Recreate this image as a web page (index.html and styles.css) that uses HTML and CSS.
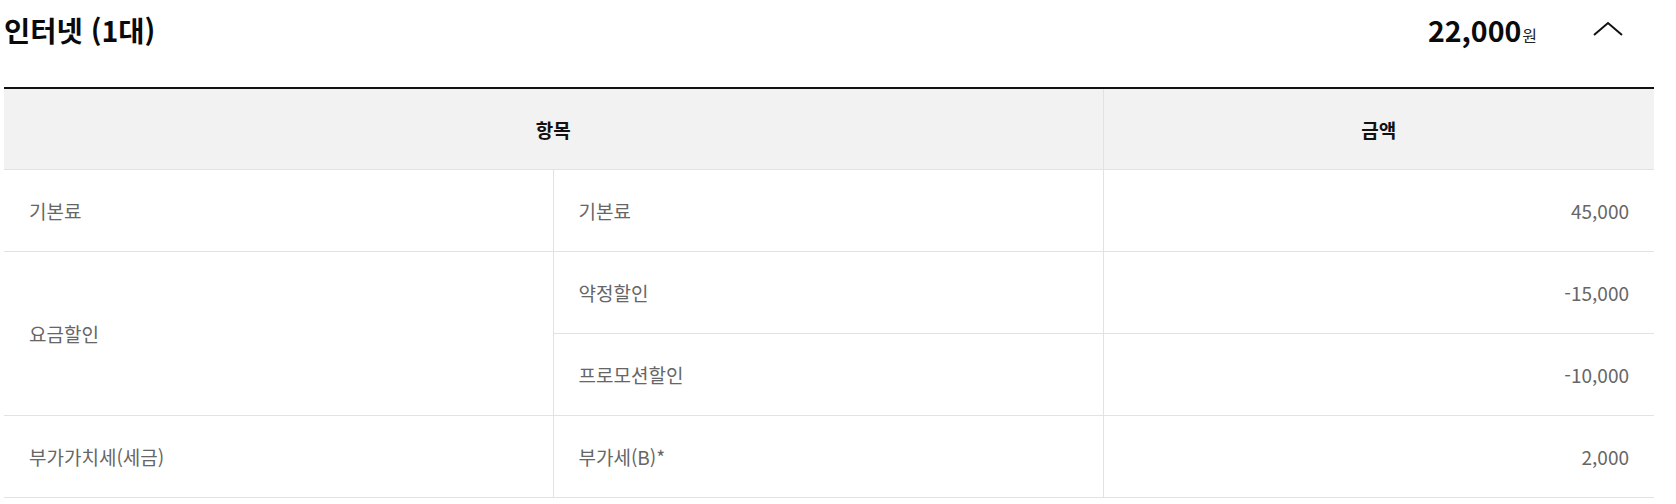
FILE: index.html
```html
<!DOCTYPE html>
<html lang="ko">
<head>
<meta charset="utf-8">
<link rel="stylesheet" href="styles.css">
</head>
<body>
<section class="bill">
  <div class="bill-head">
    <h2 class="bill-title">인터넷 (1대)</h2>
    <div class="bill-sum">
      <span class="sum-num">22,000</span><span class="sum-unit">원</span>
      <button class="toggle" aria-label="접기">
        <svg width="32" height="16" viewBox="0 0 32 16"><polyline points="2,14 16,2 30,14" fill="none" stroke="#111" stroke-width="2"/></svg>
      </button>
    </div>
  </div>
  <table class="bill-table">
    <colgroup><col class="c1"><col class="c2"><col class="c3"></colgroup>
    <thead>
      <tr><th colspan="2">항목</th><th>금액</th></tr>
    </thead>
    <tbody>
      <tr><td>기본료</td><td>기본료</td><td class="num">45,000</td></tr>
      <tr><td rowspan="2">요금할인</td><td>약정할인</td><td class="num">-15,000</td></tr>
      <tr><td class="first-sub">프로모션할인</td><td class="num">-10,000</td></tr>
      <tr><td>부가가치세(세금)</td><td>부가세(B)*</td><td class="num">2,000</td></tr>
    </tbody>
  </table>
</section>
</body>
</html>
```
FILE: styles.css
```css
html, body {
  margin: 0;
  padding: 0;
  background: #fff;
  font-family: "Noto Sans CJK KR", "Noto Sans", sans-serif;
}
.bill {
  width: 1650px;
  margin-left: 4px;
}
.bill-head {
  display: flex;
  justify-content: space-between;
  align-items: center;
  height: 58px;
  margin-bottom: 29px;
}
.bill-title {
  margin: 0;
  font-size: 28.5px;
  font-weight: 700;
  color: #0a0a0a;
}
.bill-sum {
  display: flex;
  align-items: baseline;
}
.sum-num {
  font-size: 28.5px;
  font-weight: 700;
  color: #0a0a0a;
}
.sum-unit {
  font-size: 16px;
  color: #222;
  margin-left: 1px;
}
.toggle {
  align-self: center;
  border: 0;
  background: none;
  padding: 0;
  margin-left: 55px;
  margin-right: 30px;
  display: flex;
}
.bill-table {
  width: 100%;
  border-collapse: collapse;
  table-layout: fixed;
  border-top: 2px solid #111;
}
.bill-table .c1 { width: 549px; }
.bill-table .c2 { width: 550px; }
.bill-table .c3 { width: 551px; }
.bill-table th {
  height: 80px;
  padding: 0;
  background: #f2f2f2;
  font-size: 19px;
  font-weight: 700;
  color: #111;
  text-align: center;
  border-bottom: 1px solid #e2e2e2;
  border-left: 1px solid #e2e2e2;
}
.bill-table td {
  height: 81px;
  padding: 0 25px;
  font-size: 19px;
  color: #666;
  text-align: left;
  vertical-align: middle;
  border-bottom: 1px solid #e2e2e2;
  border-left: 1px solid #e2e2e2;
}
.bill-table th:first-child,
.bill-table tbody td:first-child {
  border-left: 0;
}
.bill-table tbody td.first-sub {
  border-left: 1px solid #e2e2e2;
}
.bill-table td.num {
  text-align: right;
}
```
